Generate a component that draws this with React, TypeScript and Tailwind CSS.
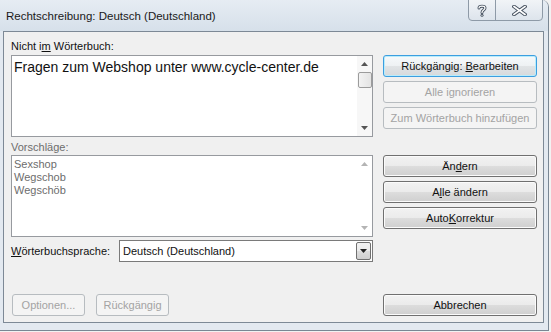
import React from "react";

const font = { fontFamily: '"Liberation Sans", Arial, sans-serif' };

function Btn({
  children,
  kind = "normal",
  className = "",
}: {
  children: React.ReactNode;
  kind?: "normal" | "focus" | "disabled";
  className?: string;
}) {
  const base =
    "h-[22px] rounded-[3px] border flex items-center justify-center text-[11px] leading-none";
  const inner = <span className="whitespace-pre">{children}</span>;
  if (kind === "disabled")
    return (
      <div
        className={`${base} border-[#b7bcc0] bg-[#f4f4f4] text-[#a3a3a3] ${className}`}
      >
        {inner}
      </div>
    );
  if (kind === "focus")
    return (
      <div
        className={`${base} border-[#3c9ee0] bg-[linear-gradient(#f6f9fb_0%,#eef1f3_50%,#e1e4e6_50%,#d6d9dc_100%)] shadow-[inset_0_0_0_1px_#b9ecfb] text-[#111] ${className}`}
      >
        {inner}
      </div>
    );
  return (
    <div
      className={`${base} border-[#707070] bg-[linear-gradient(#f2f2f2_0%,#ebebeb_50%,#dddddd_50%,#cfcfcf_100%)] shadow-[inset_0_0_0_1px_#fbfbfb] text-[#111] ${className}`}
    >
      {inner}
    </div>
  );
}

function UpArrow({ color }: { color: string }) {
  return (
    <svg width="7" height="4" viewBox="0 0 7 4">
      <path d="M0 4 L3.5 0 L7 4 Z" fill={color} />
    </svg>
  );
}
function DownArrow({ color }: { color: string }) {
  return (
    <svg width="7" height="4" viewBox="0 0 7 4">
      <path d="M0 0 L3.5 4 L7 0 Z" fill={color} />
    </svg>
  );
}

export default function App() {
  return (
    <div className="w-[551px] h-[332px] bg-[#f2f2f2] overflow-hidden" style={font}>
      <div className="w-[549px] h-[331px] bg-[#e3e9f0] border-r border-b border-[#7a8794] rounded-tr-[7px] flex flex-col">
        {/* Title bar */}
        <div className="h-[31px] flex items-start bg-[linear-gradient(#e6ecf3,#d6e0ea)] rounded-tr-[7px]">
          <div className="pl-[6px] pt-[9px] text-[11.5px] leading-[14px] text-[#1a1a1a] flex-1">
            Rechtschreibung: Deutsch (Deutschland)
          </div>
          <div className="flex mr-[5px] h-[22px] -mt-[1px] border border-[#8e9aa7] rounded-b-[4px] overflow-hidden bg-[linear-gradient(#f1f4f7,#dde4ec)]">
            <div className="w-[27px] flex items-center justify-center border-r border-[#8e9aa7]">
              <svg width="10" height="13" viewBox="0 0 10 13">
                <path
                  d="M2 4 C2 1.5 8 1.5 8 4 C8 6 5 6 5 8.5"
                  fill="none"
                  stroke="#4a5563"
                  strokeWidth="3"
                  strokeLinecap="round"
                />
                <path
                  d="M2 4 C2 1.5 8 1.5 8 4 C8 6 5 6 5 8.5"
                  fill="none"
                  stroke="#fff"
                  strokeWidth="1.2"
                  strokeLinecap="round"
                />
                <circle cx="5" cy="11.3" r="1.5" fill="#4a5563" />
                <circle cx="5" cy="11.3" r="0.6" fill="#fff" />
              </svg>
            </div>
            <div className="w-[46px] flex items-center justify-center">
              <svg width="15" height="11" viewBox="0 0 15 11">
                <path
                  d="M2 1.5 L13 9.5 M13 1.5 L2 9.5"
                  stroke="#4a5563"
                  strokeWidth="3.6"
                  strokeLinecap="square"
                />
                <path
                  d="M2 1.5 L13 9.5 M13 1.5 L2 9.5"
                  stroke="#fff"
                  strokeWidth="1.6"
                  strokeLinecap="square"
                />
              </svg>
            </div>
          </div>
        </div>

        {/* Client area */}
        <div className="ml-[3px] w-[541px] h-[292px] border border-[#7d8996] bg-[#f0f0f0] flex pl-[7px] pr-[6px] pt-[7px] pb-[6px] gap-[10px] text-[11px] text-[#111]">
          {/* Left column */}
          <div className="w-[362px] flex flex-col">
            <div className="h-[14px] leading-[14px]">
              Nicht i<span className="underline">m</span> Wörterbuch:
            </div>
            <div className="mt-[2px] h-[82px] border border-[#979a9f] bg-white flex">
              <div className="flex-1 pl-[2px] pt-[3px] text-[14px] leading-[17px] text-[#111]">
                Fragen zum Webshop unter www.cycle-center.de
              </div>
              <div className="w-[15px] bg-[#f7f7f7] flex flex-col items-center">
                <div className="h-[16px] flex items-center justify-center">
                  <UpArrow color="#555" />
                </div>
                <div className="w-[14px] h-[16px] ml-[1px] rounded-[2px] border border-[#9c9c9c] bg-[linear-gradient(90deg,#f3f3f3,#e4e4e4)]" />
                <div className="flex-1" />
                <div className="h-[16px] flex items-center justify-center">
                  <DownArrow color="#555" />
                </div>
              </div>
            </div>
            <div className="mt-[3px] h-[14px] leading-[14px] text-[#6d6d6d]">Vorschläge:</div>
            <div className="mt-[1px] h-[82px] border border-[#979a9f] bg-white flex">
              <div className="flex-1 pl-[2px] pt-[2px] leading-[13px] text-[#6d6d6d]">
                <div>Sexshop</div>
                <div>Wegschob</div>
                <div>Wegschöb</div>
              </div>
              <div className="w-[15px] flex flex-col items-center">
                <div className="h-[16px] flex items-center justify-center">
                  <UpArrow color="#b4b4b4" />
                </div>
                <div className="flex-1" />
                <div className="h-[16px] flex items-center justify-center">
                  <DownArrow color="#b4b4b4" />
                </div>
              </div>
            </div>
            <div className="mt-[3px] h-[22px] flex items-center">
              <div className="w-[108px] leading-[14px]">
                <span className="underline">W</span>örterbuchsprache:
              </div>
              <div className="w-[254px] h-[22px] border border-[#7a7a7a] bg-white flex items-center">
                <div className="flex-1 pl-[3px] leading-[14px]">Deutsch (Deutschland)</div>
                <div className="w-[15px] h-[18px] mr-[1px] border border-[#707070] rounded-[2px] bg-[linear-gradient(#f2f2f2_0%,#ebebeb_50%,#dddddd_50%,#cfcfcf_100%)] flex items-center justify-center">
                  <DownArrow color="#222" />
                </div>
              </div>
            </div>
            <div className="mt-auto flex gap-[11px] pl-[1px]">
              <Btn kind="disabled" className="w-[73px]">
                Optionen...
              </Btn>
              <Btn kind="disabled" className="w-[73px]">
                Rückgängig
              </Btn>
            </div>
          </div>

          {/* Right column */}
          <div className="w-[154px] flex flex-col">
            <Btn kind="focus" className="mt-[16px]">
              {"Rückgängig: "}
              <span className="underline">B</span>earbeiten
            </Btn>
            <Btn kind="disabled" className="mt-[4px]">
              Alle ignorieren
            </Btn>
            <Btn kind="disabled" className="mt-[4px]">
              Zum Wörterbuch hinzufügen
            </Btn>
            <Btn className="mt-[26px]">
              Än<span className="underline">d</span>ern
            </Btn>
            <Btn className="mt-[4px]">
              A<span className="underline">l</span>le ändern
            </Btn>
            <Btn className="mt-[4px]">
              Auto<span className="underline">K</span>orrektur
            </Btn>
            <Btn className="mt-auto">Abbrechen</Btn>
          </div>
        </div>
      </div>
    </div>
  );
}
